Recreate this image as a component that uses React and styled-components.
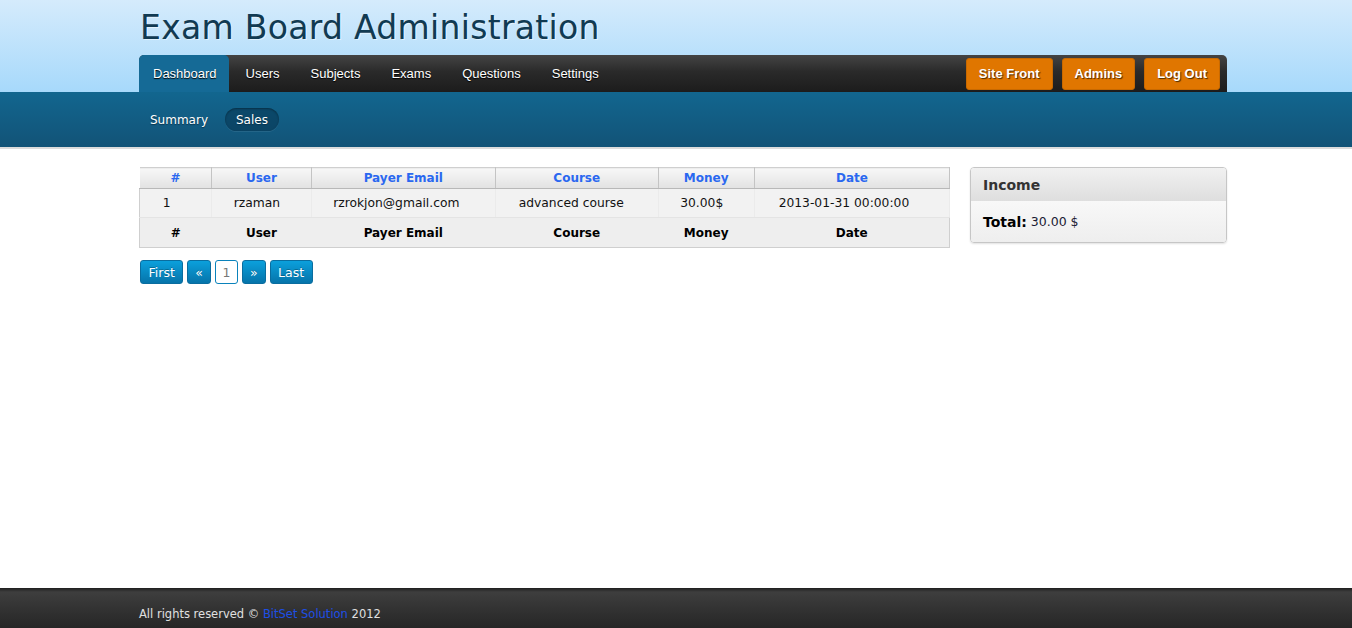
import React from 'react';
import styled, { createGlobalStyle } from 'styled-components';

const GlobalStyle = createGlobalStyle`
  html, body {
    margin: 0;
    padding: 0;
    background: #fff;
  }
  body {
    font-family: 'DejaVu Sans', Verdana, sans-serif;
    font-size: 12px;
    color: #111;
  }
`;

const Page = styled.div`
  min-height: 100vh;
  display: flex;
  flex-direction: column;
`;

const Top = styled.header`
  background: linear-gradient(to bottom, #d5ebfc 0%, #a7d9fb 100%);
`;

const Wrap = styled.div`
  width: 1088px;
  margin-left: calc(50% - 537px);
`;

const Title = styled.h1`
  margin: 0;
  padding: 8px 0 0 1px;
  height: 47px;
  font-family: 'DejaVu Sans', Verdana, sans-serif;
  font-weight: normal;
  font-size: 33px;
  letter-spacing: 0.3px;
  color: #113a52;
  text-shadow: 1px 1px 0 rgba(255, 255, 255, 0.5);
`;

const NavBar = styled.nav`
  display: flex;
  align-items: stretch;
  gap: 3px;
  height: 37px;
  background: linear-gradient(to bottom, #444 0%, #2a2a2a 45%, #1c1c1c 100%);
  border-radius: 5px 5px 0 0;
`;

const NavItem = styled.a`
  display: flex;
  align-items: center;
  padding: 0 ${({ $active }) => ($active ? 12 : 14)}px 0 14px;
  font-family: 'Liberation Sans', Arial, sans-serif;
  font-size: 13px;
  color: #fff;
  text-decoration: none;
  text-shadow: 0 1px 1px #000;
  border-radius: 5px 5px 0 0;
  margin-bottom: ${({ $active }) => ($active ? '-1px' : '0')};
  background: ${({ $active }) => ($active ? '#156a96' : 'transparent')};
  border-bottom: ${({ $active }) => ($active ? '1px solid #5e9fc0' : 'none')};
`;

const Spacer = styled.div`
  flex: 1;
`;

const ActionGroup = styled.div`
  display: flex;
  align-items: center;
  gap: 9px;
  padding-right: 7px;
`;

const OrangeButton = styled.a`
  display: flex;
  align-items: center;
  height: 32px;
  padding: 0 12px;
  border-radius: 3px;
  background: #e07600;
  border: 1px solid #c86900;
  box-sizing: border-box;
  font-family: 'Liberation Sans', Arial, sans-serif;
  font-weight: bold;
  font-size: 13px;
  color: #fff;
  text-decoration: none;
  text-shadow: 1px 1px 1px #4a2a00;
`;

const SubBand = styled.div`
  height: 55px;
  background: linear-gradient(to bottom, #12668f 0%, #125377 100%);
  border-bottom: 2px solid #dcdcdc;
`;

const SubNav = styled.div`
  display: flex;
  align-items: center;
  gap: 6px;
  padding: 16px 0 0 0;
`;

const SubItem = styled.a`
  display: flex;
  align-items: center;
  height: 23px;
  padding: 0 11px;
  border-radius: 12px;
  font-size: 12px;
  color: #fff;
  text-decoration: none;
  text-shadow: 0 1px 1px #08344c;
  background: ${({ $active }) => ($active ? 'rgba(4, 45, 70, 0.45)' : 'transparent')};
  box-shadow: ${({ $active }) =>
    $active ? 'inset 0 1px 2px rgba(0,0,0,0.35), 0 1px 0 rgba(255,255,255,0.08)' : 'none'};
`;

const Main = styled.main`
  display: flex;
  align-items: flex-start;
  gap: 20px;
  padding-top: 18px;
`;

const LeftCol = styled.div`
  width: 811px;
  flex-shrink: 0;
`;

const Table = styled.table`
  width: 100%;
  border-collapse: collapse;
  border: 1px solid #cfcfcf;
  font-size: 12.3px;
  text-align: center;
`;

const HeadCell = styled.th`
  height: 20px;
  padding: 0;
  width: ${({ $w }) => $w}px;
  background: linear-gradient(to bottom, #f7f7f7 0%, #e2e2e2 100%);
  border-left: 1px solid #fff;
  border-right: 1px solid #c4c4c4;
  border-bottom: 1px solid #b8b8b8;
  color: #2a68f0;
  font-size: 12px;
  font-weight: bold;
`;

const Cell = styled.td`
  height: 28px;
  padding: 0 ${({ $nudge }) => $nudge * 2}px 0 0;
  background: #f2f2f2;
  border-right: 1px solid #ebebeb;
  border-bottom: 1px solid #e4e4e4;
  color: #111;
`;

const FootCell = styled.th`
  height: 29px;
  padding: 0;
  background: #eeeeee;
  color: #000;
  font-size: 12px;
  font-weight: bold;
`;

const Pager = styled.div`
  display: flex;
  gap: 4px;
  margin-top: 12px;
  padding-left: 1px;
`;

const PageButton = styled.a`
  display: flex;
  align-items: center;
  justify-content: center;
  height: 24px;
  padding: 0 ${({ $pad }) => $pad}px;
  box-sizing: border-box;
  border-radius: 3px;
  font-size: 12.5px;
  text-decoration: none;
  border: 1px solid ${({ $current }) => ($current ? '#0a82bb' : '#0a6d9f')};
  background: ${({ $current }) =>
    $current ? '#fff' : 'linear-gradient(to bottom, #0ba0dc 0%, #0674aa 100%)'};
  color: ${({ $current }) => ($current ? '#777' : '#fff')};
  text-shadow: ${({ $current }) => ($current ? 'none' : '0 -1px 0 rgba(0,0,0,0.25)')};
`;

const Panel = styled.div`
  width: 257px;
  flex-shrink: 0;
  box-sizing: border-box;
  border: 1px solid #c6c6c6;
  border-radius: 4px;
  box-shadow: 0 1px 2px rgba(0, 0, 0, 0.12);
  overflow: hidden;
`;

const PanelHead = styled.div`
  height: 33px;
  display: flex;
  align-items: center;
  padding: 0 12px;
  background: linear-gradient(to bottom, #f1f1f1 0%, #dedede 100%);
  font-size: 14px;
  font-weight: bold;
  color: #333;
`;

const PanelBody = styled.div`
  height: 41px;
  display: flex;
  align-items: center;
  padding: 0 12px;
  background: linear-gradient(to bottom, #f8f8f8 0%, #eeeeee 100%);
  color: #1a1a33;
  font-size: 12.5px;

  b {
    font-size: 14px;
    color: #000;
    margin-right: 4px;
  }
`;

const Footer = styled.footer`
  margin-top: auto;
  height: 40px;
  background: linear-gradient(to bottom, #1e1e1e 0px, #3e3e3e 4px, #333 50%, #262626 100%);
`;

const FooterText = styled.p`
  margin: 0;
  padding-top: 19px;
  font-size: 11.5px;
  color: #e0e0e0;

  a {
    color: #1d4fe6;
    text-decoration: none;
  }
`;

const columns = [
  { label: '#', w: 72 },
  { label: 'User', w: 99 },
  { label: 'Payer Email', w: 184 },
  { label: 'Course', w: 163 },
  { label: 'Money', w: 96 },
  { label: 'Date', w: 196 },
];

// value, and how far its text sits left of the column centre
const row = [
  ['1', 9],
  ['rzaman', 4.5],
  ['rzrokjon@gmail.com', 7],
  ['advanced course', 5.5],
  ['30.00$', 4.5],
  ['2013-01-31 00:00:00', 8],
];

export default function App() {
  return (
    <Page>
      <GlobalStyle />
      <Top>
        <Wrap>
          <Title>Exam Board Administration</Title>
          <NavBar>
            <NavItem $active>Dashboard</NavItem>
            <NavItem>Users</NavItem>
            <NavItem>Subjects</NavItem>
            <NavItem>Exams</NavItem>
            <NavItem>Questions</NavItem>
            <NavItem>Settings</NavItem>
            <Spacer />
            <ActionGroup>
              <OrangeButton>Site Front</OrangeButton>
              <OrangeButton>Admins</OrangeButton>
              <OrangeButton>Log Out</OrangeButton>
            </ActionGroup>
          </NavBar>
        </Wrap>
      </Top>
      <SubBand>
        <Wrap>
          <SubNav>
            <SubItem>Summary</SubItem>
            <SubItem $active>Sales</SubItem>
          </SubNav>
        </Wrap>
      </SubBand>
      <Wrap>
        <Main>
          <LeftCol>
            <Table>
              <thead>
                <tr>
                  {columns.map((c) => (
                    <HeadCell key={c.label} $w={c.w}>{c.label}</HeadCell>
                  ))}
                </tr>
              </thead>
              <tbody>
                <tr>
                  {row.map(([v, nudge], i) => (
                    <Cell key={i} $nudge={nudge}>{v}</Cell>
                  ))}
                </tr>
              </tbody>
              <tfoot>
                <tr>
                  {columns.map((c) => (
                    <FootCell key={c.label}>{c.label}</FootCell>
                  ))}
                </tr>
              </tfoot>
            </Table>
            <Pager>
              <PageButton $pad={7.5}>First</PageButton>
              <PageButton $pad={7}>«</PageButton>
              <PageButton $pad={6.5} $current>1</PageButton>
              <PageButton $pad={7}>»</PageButton>
              <PageButton $pad={7.5}>Last</PageButton>
            </Pager>
          </LeftCol>
          <Panel>
            <PanelHead>Income</PanelHead>
            <PanelBody>
              <b>Total:</b> 30.00 $
            </PanelBody>
          </Panel>
        </Main>
      </Wrap>
      <Footer>
        <Wrap>
          <FooterText>
            All rights reserved © <a>BitSet Solution</a> 2012
          </FooterText>
        </Wrap>
      </Footer>
    </Page>
  );
}
